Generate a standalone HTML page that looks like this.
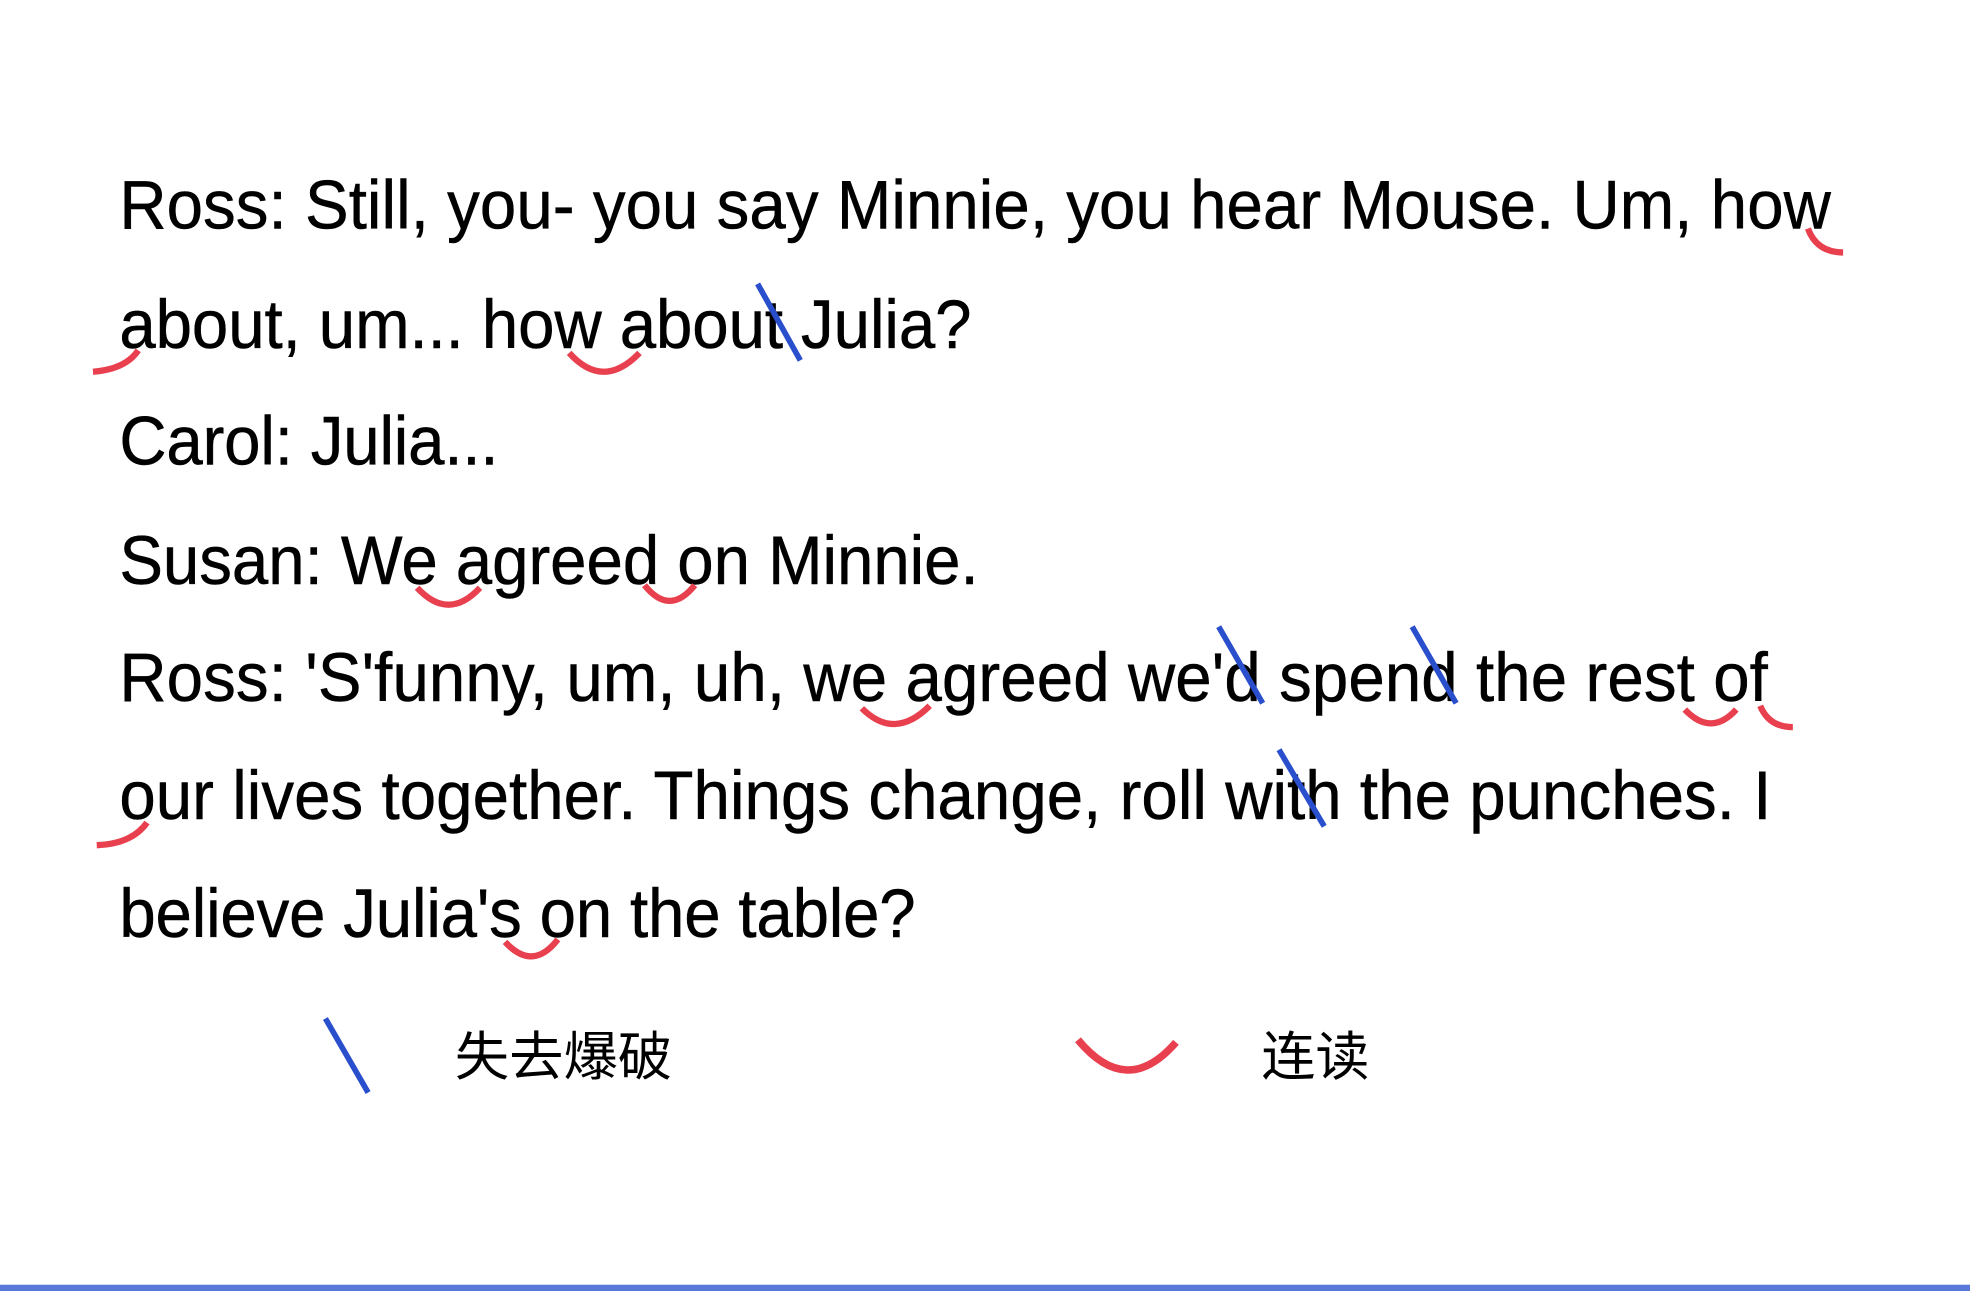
<!DOCTYPE html>
<html><head><meta charset="utf-8"><style>
html,body{margin:0;padding:0;background:#fff;width:1970px;height:1291px;overflow:hidden}
svg{display:block}
text{font-family:"Liberation Sans",Arial,sans-serif;fill:#000}
.cjk{font-family:"Liberation Sans","Noto Sans CJK SC",sans-serif}
</style></head><body>
<svg width="1970" height="1291" viewBox="0 0 1568 1028" preserveAspectRatio="none">
<rect x="0" y="0" width="1568" height="1028" fill="#fff"/>
<g font-size="55" stroke="#000" stroke-width="0.4">
<text transform="translate(95,182) scale(0.946,1)" x="0" y="0" textLength="1440" lengthAdjust="spacing">Ross: Still, you- you say Minnie, you hear Mouse. Um, how</text>
<text transform="translate(95,277) scale(0.946,1)" x="0" y="0" textLength="717" lengthAdjust="spacing">about, um... how about Julia?</text>
<text transform="translate(95,370) scale(0.946,1)" x="0" y="0" textLength="319" lengthAdjust="spacing">Carol: Julia...</text>
<text transform="translate(95,465) scale(0.946,1)" x="0" y="0" textLength="723" lengthAdjust="spacing">Susan: We agreed on Minnie.</text>
<text transform="translate(95,558) scale(0.946,1)" x="0" y="0" textLength="1387" lengthAdjust="spacing">Ross: 'S'funny, um, uh, we agreed we'd spend the rest of</text>
<text transform="translate(95,652) scale(0.946,1)" x="0" y="0" textLength="1390" lengthAdjust="spacing">our lives together. Things change, roll with the punches. I</text>
<text transform="translate(95,746) scale(0.946,1)" x="0" y="0" textLength="670" lengthAdjust="spacing">believe Julia's on the table?</text>
</g>
<g fill="none" stroke="#e8404e" stroke-width="5" stroke-linecap="butt">
<path d="M1439,182 Q1446,201 1467,201"/>
<path d="M74,296 Q100,294 110,279"/>
<path d="M453,281 Q480,311 509,281"/>
<path d="M332,468 Q357,495 382,468"/>
<path d="M513,466 Q533,491 553,466"/>
<path d="M686,564 Q712,590 740,562"/>
<path d="M1341,565 Q1362,587 1382,565"/>
<path d="M1401,562 Q1408,579 1427,579"/>
<path d="M77,673 Q105,672 117,655"/>
<path d="M402,750 Q424,774 444,748"/>
<path d="M858,828 Q897,875 936,830" stroke-width="6"/>
</g>
<g stroke="#2a4fcc" stroke-width="4.5">
<line x1="603" y1="226" x2="637" y2="287"/>
<line x1="970" y1="499" x2="1005" y2="560"/>
<line x1="1124" y1="499" x2="1159" y2="560"/>
<line x1="1018" y1="597" x2="1054" y2="658"/>
<line x1="259" y1="811" x2="293" y2="870"/>
</g>
<text class="cjk" x="362" y="856" font-size="42" textLength="173" lengthAdjust="spacingAndGlyphs">失去爆破</text>
<text class="cjk" x="1004" y="856" font-size="42" textLength="86" lengthAdjust="spacingAndGlyphs">连读</text>
<rect x="0" y="1023" width="1568" height="5" fill="#5a78d8"/>
</svg>
</body></html>
